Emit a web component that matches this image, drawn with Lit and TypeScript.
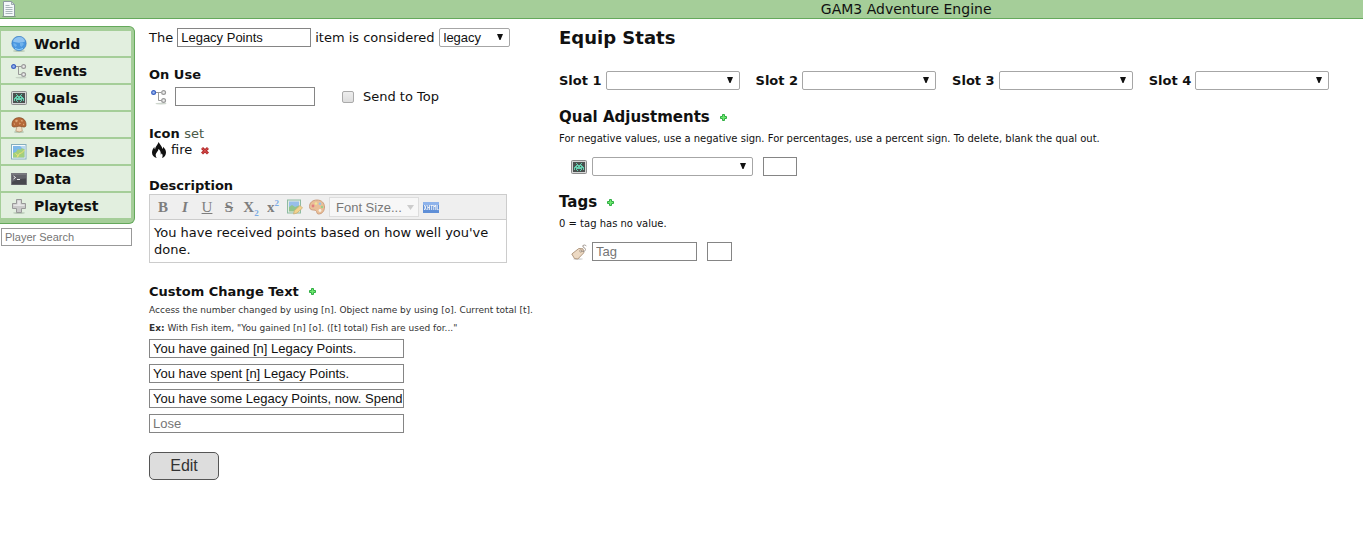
import { LitElement, html, css, svg } from "lit";
import { customElement, property } from "lit/decorators.js";

const icons: Record<string, unknown> = {
  page: svg`
    <path d="M2.500 .5h8l3 3v12h-11z" fill="#f4f8fa" stroke="#8d9aa0"/>
    <path d="M10.500 .5v3h3z" fill="#d5dee2" stroke="#8d9aa0" stroke-width=".8"/>
    <path d="M4.500 4.500h4M4.500 6.500h7M4.500 8.500h7M4.500 10.500h7M4.500 12.500h7" stroke="#a9b6ba"/>
    <path d="M1 15.700h14" stroke="#6f8f6a" stroke-width=".6"/>`,
  world: svg`
    <ellipse cx="8" cy="15" rx="6" ry="1" fill="#9fb39d" opacity=".6"/>
    <circle cx="8" cy="7.500" r="7.200" fill="#4a97e0" stroke="#3576bd" stroke-width=".6"/>
    <path d="M2 5.500C3 2 6 1 8.500 1c3 0 5 2 5.500 4.500-3 1.500-9 1.500-12 0z" fill="#8fc2f0"/>
    <path d="M2.500 7l2.500 1 1 1.500-1.500 1.500-2-2zM9 7l2.500-.5 1.500 1.500-2.500 3-1.500-1.500z" fill="#6fb2ec"/>
    <path d="M4 12.500q4 2.500 8 0" stroke="#8fd0fb" fill="none"/>`,
  events: svg`
    <ellipse cx="10" cy="14.600" rx="5.500" ry=".9" fill="#b9c4b8" opacity=".7"/>
    <path d="M5 3.500h5M7.500 3.500v8h3" fill="none" stroke="#999"/>
    <circle cx="2.600" cy="3.500" r="1.900" fill="#9bb8f0" stroke="#3a60c0" stroke-width="1.200"/>
    <circle cx="12.600" cy="3.500" r="1.900" fill="#eee" stroke="#999" stroke-width="1.200"/>
    <circle cx="12.600" cy="11.500" r="1.900" fill="#eee" stroke="#999" stroke-width="1.200"/>`,
  quals: svg`
    <rect x=".5" y="1.500" width="15" height="13" rx="1" fill="#d5d5d5" stroke="#8c8c8c"/>
    <rect x="2" y="3" width="12" height="10" fill="#4a5250"/>
    <path fill="#65d0b0" d="M5 4h1v1H5zM10 4h1v1h-1zM6 5h1v1H6zM9 5h1v1H9zM5 6h6v1H5zM4 7h2v1H4zM7 7h2v1H7zM10 7h2v1h-2zM3 8h10v1H3zM3 9h1v2H3zM5 9h6v1H5zM12 9h1v2h-1zM5 10h1v1H5zM10 10h1v1h-1zM6 11h1v1H6zM9 11h1v1H9z"/>`,
  items: svg`
    <ellipse cx="8" cy="15" rx="5" ry=".9" fill="#9fb39d" opacity=".7"/>
    <path d="M6 9h4.500l.8 5q-3 1.800-6.500 0z" fill="#f0dcc0" stroke="#a98560" stroke-width=".6"/>
    <path d="M1 8.500C.5 3.500 4 .6 8 .6s7.500 3 7 7.900c0 1.600-2.500 2-3.800 1.200Q8 8.500 5 9.800C3.500 10.500 1 10 1 8.500z" fill="#b5693a" stroke="#7f4420" stroke-width=".6"/>
    <path d="M4 3.500l2-1 1 1.500-2 1.500zM9.500 2.500l2.500 1-1 1.800zM8 5.500l2 .8-1.500 1.500zM2.500 6.500l1.500 0v1.800zM12 6.500l1.500 1-1.500 1z" fill="#e0a878"/>`,
  places: svg`
    <rect x=".5" y=".5" width="14.500" height="14.500" fill="#f8fbfd" stroke="#84aebd"/>
    <rect x="2" y="2" width="11.500" height="11.500" fill="#7db8e8"/>
    <path d="M2 13.500V9l3-1 2-3 2 1 2-2 2.500 1v8.500z" fill="#a3cf7b"/>
    <path d="M6 13.500l2.500-4 2-.5 3-3M4.500 9.500l3 2.500" stroke="#f0e277" fill="none"/>
    <path d="M9 2h4.500v3l-2-.5z" fill="#b8d9ee"/>`,
  data: svg`
    <rect x="0" y="2" width="16" height="12" fill="#77777d"/>
    <rect x="1" y="4" width="14" height="9.500" fill="#48484e"/>
    <path d="M1 4h14v3.500Q7 7.500 1 11z" fill="#63636a"/>
    <path d="M2.500 5l2 1.500-2 1.500M6 8.500h3" stroke="#fff" fill="none" stroke-width=".9"/>`,
  playtest: svg`
    <ellipse cx="8" cy="15" rx="6" ry=".9" fill="#9fb39d" opacity=".6"/>
    <path d="M5.500 1.500h5v4h4v5h-4v4h-5v-4h-4v-5h4z" fill="#c9c9c9" stroke="#999"/>
    <path d="M6.500 2.500h3v4h4v1.500h-11V6.500h4z" fill="#e6e6e6"/>`,
  fire: svg`
    <path fill="#111" d="M7.500 0c1 2.200 3.600 4 4 7 .5-.6.700-1.400.6-2.300C14 6.500 15 8.500 15 10.500c0 2.700-1.500 4.600-4 5.500.9-1.500.8-3.200-.2-4.700-.2.700-.5 1.100-1 1.400C10 9.800 8.900 7.800 7.300 7c.2 2.500-2.600 3.600-2.600 6.200 0 1.100.4 2 1.100 2.800C2.800 15.200 1 13.300 1 10.500 1 8.300 2.100 6.500 3.300 5c0 1 .2 1.800.8 2.500C4.200 4.300 6.900 3 7.500 0z"/>`,
  remove: svg`
    <path d="M6 6l6 5.500M12 6l-6 5.500" stroke="#b22a2a" stroke-width="3"/>
    <path d="M6.300 6.300l5.400 4.900M11.700 6.300l-5.400 4.900" stroke="#dd5555" stroke-width="1"/>`,
  add: svg`
    <path d="M7.500 4.500h2v2h2v2h-2v2h-2v-2h-2v-2h2z" fill="#6fe86f" stroke="#2fae42"/>`,
  tag: svg`
    <ellipse cx="7" cy="15" rx="5" ry=".8" fill="#bbb" opacity=".7"/>
    <path d="M.8 10l7-5.500 4.200.3.800 4-6 6.200-3.300-.5z" fill="#ecd9c3" stroke="#a98f75" stroke-width=".9"/>
    <circle cx="9.800" cy="7" r="1.100" fill="#fff" stroke="#8f7860" stroke-width=".7"/>
    <path d="M10 7q4 1.500 4.500-1.500-.5-2-2.500-2.500-1-2 1.500-2 1.500.2 1.800 1.200" fill="none" stroke="#9a9088" stroke-width=".9"/>`,
  image: svg`
    <rect x=".5" y="1" width="13" height="13" fill="#dcebdc" stroke="#4e9a70"/>
    <rect x="2" y="2.500" width="10" height="6" fill="#5d9fe8"/>
    <path d="M2 12.500V8l3-2 3 2 4-1.500v6z" fill="#53a84c"/>
    <path d="M6.500 15l1-3.500 5.500-5 2.500 2.500-5.500 5z" fill="#f5c14d" stroke="#b5832a" stroke-width=".8"/>`,
  palette: svg`
    <path d="M8 1c4.500 0 7.500 2.900 7.500 7 0 3.600-2 7-6 7-2.200 0-1.200-2.400-2.800-3.500C5 10.500.5 12 .5 7.500.5 3.800 3.500 1 8 1z" fill="#e8a060" stroke="#b0602a" stroke-width=".9"/>
    <circle cx="4" cy="7" r="1.400" fill="#d33"/><circle cx="7" cy="4.500" r="1.300" fill="#f3e05a"/>
    <circle cx="11" cy="4.800" r="1.300" fill="#5aa7e8"/><circle cx="13" cy="8" r="1.200" fill="#5fbf4c"/>
    <circle cx="11" cy="11.500" r="1.400" fill="#fff3e0"/>`,
  markup: svg`
    <rect x="0" y="3" width="16" height="11" fill="#2f6fd0"/>
    <rect x="0" y="3" width="16" height="3" fill="#6ea0ea"/>
    <path stroke="#fff" stroke-width=".9" fill="none" d="M1.300 6l2 5M3.300 6l-2 5M4.800 6v5M6.600 6v5M4.800 8.500h1.800M7.500 6.500h2.400M8.700 6.500V11M10.800 11V6l1 2 1-2v5M14.200 6v4.600h1.400"/>`,
};

const icon = (name: string) => html`
  <svg class="icon" width="16" height="16" viewBox="0 0 16 16" aria-hidden="true">${icons[name]}</svg>
`;

const shared = css`
  * {
    box-sizing: border-box;
  }
  .icon {
    display: block;
    flex: none;
  }
  input,
  select,
  button {
    font-family: "Liberation Sans", Arial, sans-serif;
    font-size: 13px;
    margin: 0;
  }
  .field {
    height: 19px;
    padding: 0 0 0 3px;
    border: 1px solid #858585;
    border-radius: 0;
    background: #fff;
    color: #111;
  }
  .field::placeholder {
    color: #757575;
  }
`;

@customElement("side-menu")
class SideMenu extends LitElement {
  static styles = [
    shared,
    css`
      :host {
        display: block;
      }
      .menu {
        display: flex;
        flex-direction: column;
        gap: 2px;
        padding: 4px 3px 5px 1px;
        background: #a5ce99;
        border: 1px solid #65a95c;
        border-left: 0;
        border-radius: 0 6px 6px 0;
      }
      .link {
        display: flex;
        align-items: center;
        gap: 7px;
        height: 25px;
        padding: 1px 0 0 10px;
        background: #e2efdf;
        color: #111;
        font-size: 14px;
        font-weight: bold;
        text-decoration: none;
      }
      .search {
        display: block;
        width: calc(100% - 4px);
        height: 18px;
        margin: 4px 3px 0 1px;
        border-color: #999;
        font-size: 11px;
      }
    `,
  ];

  render() {
    const entries = ["World", "Events", "Quals", "Items", "Places", "Data", "Playtest"];
    return html`
      <nav class="menu">
        ${entries.map((e) => html`<a class="link" href="#${e.toLowerCase()}">${icon(e.toLowerCase())}${e}</a>`)}
      </nav>
      <input class="field search" type="text" placeholder="Player Search" aria-label="Player Search" />
    `;
  }
}

@customElement("rich-editor")
class RichEditor extends LitElement {
  @property() value = "";

  static styles = [
    shared,
    css`
      :host {
        display: block;
        border: 1px solid #ccc;
      }
      .toolbar {
        display: flex;
        align-items: center;
        height: 25px;
        padding-left: 2px;
        background: #efefef;
        border-bottom: 1px solid #ccc;
      }
      .tool {
        display: flex;
        align-items: center;
        justify-content: center;
        width: 22px;
        height: 22px;
        padding: 0;
        border: 0;
        background: none;
        color: #333;
        font-family: "Liberation Serif", serif;
        font-size: 15px;
        line-height: 16px;
        opacity: 0.6;
      }
      .bold {
        font-weight: bold;
      }
      .italic {
        font-style: italic;
        font-weight: bold;
      }
      .under {
        text-decoration: underline;
      }
      .strike {
        text-decoration: line-through;
        font-weight: bold;
      }
      .small {
        color: #2f7fe0;
        font-size: 9px;
        line-height: 0;
      }
      .size {
        appearance: none;
        width: 90px;
        height: 20px;
        margin-left: 1px;
        padding: 0 6px;
        border: 1px solid #ddd;
        border-radius: 0;
        color: #777;
        background: #f7f7f7
          url('data:image/svg+xml,<svg xmlns="http://www.w3.org/2000/svg" width="7" height="5"><path d="M0 0h7L3.500 5z" fill="%23ccc"/></svg>')
          no-repeat right 4px center;
      }
      .xhtml {
        width: 24px;
        opacity: 0.75;
      }
      .text {
        display: block;
        width: 100%;
        height: 42px;
        padding: 4px;
        border: 0;
        resize: none;
        overflow: hidden;
        background: #fff;
        color: #111;
        font: 13px/17px "DejaVu Sans", Verdana, sans-serif;
      }
    `,
  ];

  render() {
    return html`
      <div class="toolbar" role="toolbar">
        <button class="tool bold" aria-label="Bold">B</button>
        <button class="tool italic" aria-label="Italic">I</button>
        <button class="tool under" aria-label="Underline">U</button>
        <button class="tool strike" aria-label="Strikethrough">S</button>
        <button class="tool bold" aria-label="Subscript"><span>X<sub class="small">2</sub></span></button>
        <button class="tool bold" aria-label="Superscript"><span>x<sup class="small">2</sup></span></button>
        <button class="tool" aria-label="Image">${icon("image")}</button>
        <button class="tool" aria-label="Color">${icon("palette")}</button>
        <select class="size" aria-label="Font size"><option>Font Size...</option></select>
        <button class="tool xhtml" aria-label="XHTML">${icon("markup")}</button>
      </div>
      <textarea class="text" aria-label="Description" .value=${this.value}></textarea>
    `;
  }
}

@customElement("app-root")
class AppRoot extends LitElement {
  static styles = [
    shared,
    css`
      :host {
        display: block;
        color: #111;
        font: 13px/17px "DejaVu Sans", Verdana, sans-serif;
      }
      h2,
      h3,
      h4,
      p {
        margin: 0;
      }
      .header {
        display: grid;
        grid-template-columns: 3fr 2fr;
        align-items: center;
        height: 19px;
        background: #a5ce99;
        border-bottom: 1px solid #65a95c;
      }
      .header .icon {
        margin-left: 1px;
      }
      .title {
        padding-left: 3px;
        font-size: 14px;
        font-weight: normal;
      }
      .page {
        display: grid;
        grid-template-columns: 135px 396px minmax(0, 1fr);
        column-gap: 14px;
      }
      .side {
        padding-top: 7px;
      }
      .column {
        padding-top: 9px;
      }
      .block {
        margin-top: 19px;
      }
      .row {
        display: flex;
        align-items: center;
        height: 19px;
      }
      .sentence {
        gap: 4px;
      }
      .name {
        width: 134px;
      }
      .select {
        appearance: none;
        height: 19px;
        padding: 0 4px;
        border: 1px solid #a6a6a6;
        border-radius: 2px;
        color: #111;
        background: #fff
          url('data:image/svg+xml,<svg xmlns="http://www.w3.org/2000/svg" width="6" height="6"><path d="M0 0h6L3.500 6h-1z" fill="%23111"/></svg>')
          no-repeat right 6px top 5px;
      }
      .kind {
        width: 71px;
      }
      .label {
        font-size: 13px;
        font-weight: bold;
      }
      .use {
        margin-top: 4px;
        padding-left: 2px;
      }
      .event {
        width: 140px;
        margin-left: 8px;
      }
      .check {
        appearance: none;
        width: 12px;
        height: 12px;
        margin: 0 9px 0 27px;
        border: 1px solid #aaa;
        border-radius: 2px;
        background: linear-gradient(#eee, #ddd);
      }
      .set {
        color: #4b5a48;
        font-weight: normal;
      }
      .fire {
        display: flex;
        align-items: center;
        gap: 4px;
        padding-left: 2px;
        line-height: 16px;
      }
      .mini {
        display: inline-flex;
        padding: 0;
        border: 0;
        background: none;
      }
      .editor {
        width: 358px;
      }
      .heading {
        display: flex;
        align-items: center;
        gap: 5px;
        line-height: 19px;
      }
      .change {
        font-size: 13px;
      }
      .help {
        font-size: 9px;
        line-height: 18px;
        color: #333;
        white-space: nowrap;
      }
      .changes {
        display: flex;
        flex-direction: column;
        gap: 6px;
        width: 255px;
        margin-top: 2px;
      }
      .edit {
        width: 70px;
        height: 28px;
        padding: 0;
        border: 1px solid #555;
        border-radius: 5px;
        background: #ddd;
        color: #333;
        font-size: 16px;
      }
      .equip {
        font-size: 18px;
        line-height: 19px;
      }
      .slots {
        display: flex;
        flex-wrap: wrap;
        gap: 8px 16px;
        margin: 24px 0 18px;
      }
      .slot {
        gap: 4px;
      }
      .section {
        font-size: 15px;
      }
      .hint {
        margin-top: 3px;
        font-size: 10px;
        line-height: 18px;
      }
      .entry {
        gap: 10px;
        margin: 9px 0 17px;
        padding-left: 12px;
      }
      .pair {
        display: flex;
        align-items: center;
        gap: 5px;
      }
      .qual {
        width: 161px;
      }
      .amount {
        width: 34px;
      }
      .tagname {
        width: 105px;
      }
      .tagvalue {
        width: 25px;
      }
    `,
  ];

  private adder(what: string) {
    return html`<button class="mini" aria-label="Add ${what}">${icon("add")}</button>`;
  }

  render() {
    const changes = [
      "You have gained [n] Legacy Points.",
      "You have spent [n] Legacy Points.",
      "You have some Legacy Points, now. Spend",
      "",
    ];
    return html`
      <header class="header">
        ${icon("page")}
        <div class="title">GAM3 Adventure Engine</div>
      </header>
      <div class="page">
        <side-menu class="side"></side-menu>
        <main class="column">
          <div class="row sentence">
            <label for="name">The</label>
            <input class="field name" id="name" type="text" .value=${"Legacy Points"} />
            <label for="kind">item is considered</label>
            <select class="select kind" id="kind"><option>legacy</option></select>
          </div>

          <div class="block">
            <label class="label" for="event">On Use</label>
            <div class="row use">
              ${icon("events")}
              <input class="field event" id="event" type="text" />
              <input class="check" id="top" type="checkbox" />
              <label for="top">Send to Top</label>
            </div>
          </div>

          <div class="block">
            <h4 class="label">Icon <span class="set">set</span></h4>
            <div class="fire">
              ${icon("fire")}<span>fire</span>
              <button class="mini" aria-label="Remove icon">${icon("remove")}</button>
            </div>
          </div>

          <div class="block">
            <h4 class="label">Description</h4>
            <rich-editor class="editor" value="You have received points based on how well you've done."></rich-editor>
          </div>

          <div class="block">
            <h4 class="heading change">Custom Change Text ${this.adder("change text")}</h4>
            <p class="help">Access the number changed by using [n]. Object name by using [o]. Current total [t].</p>
            <p class="help"><b>Ex:</b> With Fish item, "You gained [n] [o]. ([t] total) Fish are used for..."</p>
            <div class="changes">
              ${changes.map(
                (text, i) => html`<input
                  class="field"
                  type="text"
                  placeholder="Lose"
                  aria-label="Change text ${i + 1}"
                  .value=${text}
                />`
              )}
            </div>
          </div>

          <div class="block"><button class="edit">Edit</button></div>
        </main>
        <section class="column">
          <h2 class="equip">Equip Stats</h2>
          <div class="slots">
            ${[1, 2, 3, 4].map(
              (n) => html`<div class="row slot">
                <label class="label" for="slot${n}">Slot ${n}</label>
                <select class="select name" id="slot${n}"><option></option></select>
              </div>`
            )}
          </div>

          <h3 class="heading section">Qual Adjustments ${this.adder("qual")}</h3>
          <p class="hint">
            For negative values, use a negative sign. For percentages, use a percent sign. To delete, blank the qual
            out.
          </p>
          <div class="row entry">
            <div class="pair">
              ${icon("quals")}
              <select class="select qual" aria-label="Qual"><option></option></select>
            </div>
            <input class="field amount" type="text" aria-label="Qual amount" />
          </div>

          <h3 class="heading section">Tags ${this.adder("tag")}</h3>
          <p class="hint">0 = tag has no value.</p>
          <div class="row entry">
            <div class="pair">
              ${icon("tag")}
              <input class="field tagname" type="text" placeholder="Tag" aria-label="Tag" />
            </div>
            <input class="field tagvalue" type="text" aria-label="Tag value" />
          </div>
        </section>
      </div>
    `;
  }
}
